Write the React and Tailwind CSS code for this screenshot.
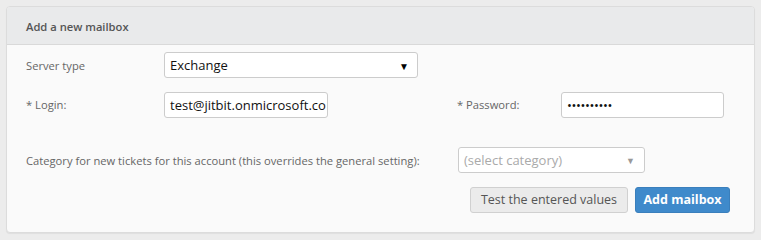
import React from 'react'

const font = { fontFamily: '"Open Sans", "Liberation Sans", sans-serif' }

function Field({ width, children, className = '' }) {
  return (
    <div className={`h-[26px] ${width} bg-white border border-[#cccccc] rounded-[3px] flex items-center pl-[5px] pt-[2px] ${className}`}>
      {children}
    </div>
  )
}

export default function App() {
  return (
    <div className="w-[761px] h-[240px] bg-[#ececec] pt-[6px] pl-[6px]" style={font}>
      <div className="w-[749px] h-[227px] bg-[#fafafa] border border-[#dcdcdc] rounded-[4px] overflow-hidden shadow-[0_1px_1px_rgba(0,0,0,0.06)]">
        {/* Header */}
        <div className="h-[38px] bg-[#e9eaeb] border-b border-[#d9d9d9] flex items-center pl-[19px] pt-[3px] text-[11.2px] font-semibold text-[#555555]">
          Add a new mailbox
        </div>

        <div className="pl-[19px] pr-[24px] pt-[7px] text-[11.2px] text-[#666666]">
          {/* Server type */}
          <div className="flex items-center">
            <div className="w-[138px] pt-[3px]">Server type</div>
            <Field width="w-[254px]" className="justify-between pr-[8px]">
              <span className="text-[13px] text-[#111111]">Exchange</span>
              <span className="text-[10px] text-black">▼</span>
            </Field>
          </div>

          {/* Login / password */}
          <div className="flex items-center mt-[14px]">
            <div className="w-[138px] pt-[1px]">* Login:</div>
            <Field width="w-[164px]" className="overflow-hidden">
              <span className="text-[13px] text-[#111111] whitespace-nowrap">test@jitbit.onmicrosoft.co</span>
            </Field>
            <div className="w-[104px] ml-[129px] pt-[1px]">* Password:</div>
            <Field width="w-[163px]">
              <span className="text-[13px] text-[#111111] tracking-[-0.4px]">••••••••••</span>
            </Field>
          </div>

          {/* Category */}
          <div className="flex items-center mt-[29px]">
            <div className="w-[432px] pt-[3px]">Category for new tickets for this account (this overrides the general setting):</div>
            <Field width="w-[187px]" className="justify-between pr-[9px] h-[25px]">
              <span className="text-[13px] text-[#aaaaaa]">(select category)</span>
              <span className="text-[9px] text-[#999999]">▼</span>
            </Field>
          </div>

          {/* Buttons */}
          <div className="flex justify-end gap-[7px] mt-[14px]">
            <button className="h-[26px] w-[158px] bg-[#ebebeb] border border-[#d0d0d0] rounded-[3px] text-[12.5px] text-[#555555]">
              Test the entered values
            </button>
            <button className="h-[26px] w-[95px] bg-[#3f8acb] border border-[#3a7fbc] rounded-[3px] text-[12.5px] font-bold text-white">
              Add mailbox
            </button>
          </div>
        </div>
      </div>
    </div>
  )
}
